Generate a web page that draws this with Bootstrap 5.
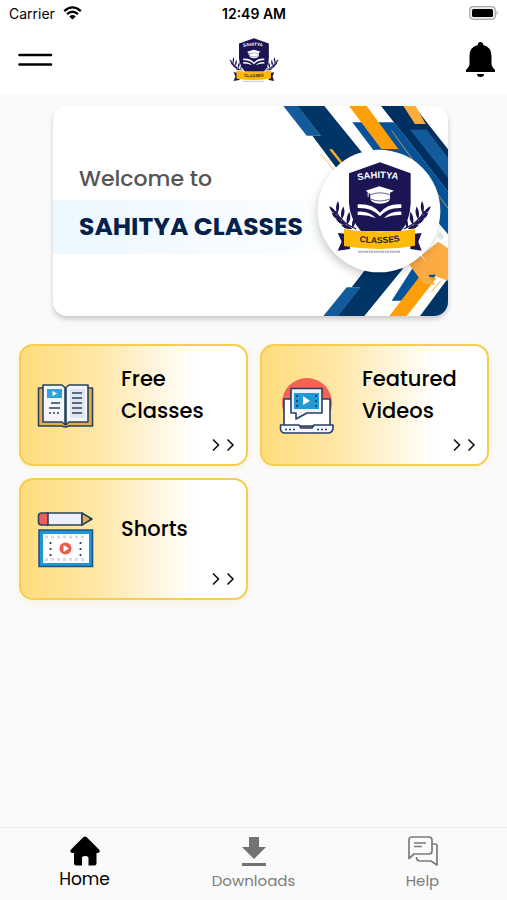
<!DOCTYPE html>
<html lang="en">
<head>
<meta charset="utf-8">
<meta name="viewport" content="width=device-width, initial-scale=1">
<title>Sahitya Classes</title>
<link href="https://cdn.jsdelivr.net/npm/bootstrap@5.3.0/dist/css/bootstrap.min.css" rel="stylesheet">
<style>
  body { background: #fafafa; color: #000; font-family: Poppins, Inter, "Liberation Sans", sans-serif; }
  svg { display: block; flex-shrink: 0; }
  .status-bar { height: 28px; font-family: Inter, "Liberation Sans", sans-serif; font-size: 14px; line-height: 28px; padding: 0 8px 0 9px; }
  .status-side { flex: 1 1 0; }
  .top-bar { height: 66px; padding: 0 12px 3px; }
  .top-side { flex: 1 1 0; }
  .banner { margin: 12px 59px 28px 53px; height: 210px; border-radius: 14px; box-shadow: 0 3px 5px rgba(0,0,0,.2); overflow: hidden; }
  .banner-art { right: 0; top: 0; height: 100%; }
  .banner-hello { font-size: 22px; line-height: 32px; font-weight: 500; color: #555; padding: 57px 0 5px 26px; }
  .banner-name { font-size: 25px; line-height: 54px; font-weight: 700; color: #04224a; padding-left: 26px; background: linear-gradient(90deg, #ecf7ff, #fff 80%); }
  .tiles { gap: 12px; grid-template-columns: 1fr 1fr; padding: 0 18px 0 19px; }
  .tile { min-height: 122px; border: 2px solid #f6cd4f; border-radius: 14px; background: linear-gradient(90deg, #ffdc7c, #ffe7a8 34%, #fff 77%); box-shadow: 0 2px 6px rgba(246,205,79,.2); padding: 0 16px; color: #000; gap: 27px; }
  .tile:hover { color: #000; }
  .tile-name { font-size: 21px; line-height: 32px; font-weight: 500; padding-bottom: 20px; }
  .tile-more { right: 11px; bottom: 12px; }
  .tab-bar { height: 73px; border-top: 1px solid #ececec; padding-top: 8px; }
  .tab { font-size: 15px; line-height: 24px; color: #7b7b7b; gap: 3px; }
  .tab.current { color: #000; font-size: 17px; gap: 1px; }
</style>
<script src="https://cdn.jsdelivr.net/npm/bootstrap@5.3.0/dist/js/bootstrap.bundle.min.js"></script>
</head>
<body class="d-flex flex-column min-vh-100">
<svg width="0" height="0" class="position-absolute" aria-hidden="true">
  <defs>
    <path id="arc-top" d="M99 77Q164 61 232 77"/>
    <path id="arc-ribbon" d="M103 260Q165 270 226 258"/>
    <g id="laurel" fill="#1c1553" stroke="#1c1553">
      <path d="M32 168Q50 205 94 222" fill="none" stroke-width="4"/>
      <path d="M36 176Q29 155 39 138Q48 158 36 176ZM50 194Q44 174 55 154Q64 176 50 194ZM66 209Q61 188 73 170Q82 192 66 209ZM82 220Q78 200 88 186Q96 204 82 220ZM38 179Q29 161 13 153Q16 175 38 179ZM49 195Q38 176 20 173Q26 194 49 195ZM65 209Q51 192 33 192Q41 210 65 209ZM82 221Q66 206 48 209Q59 225 82 221Z" stroke="none"/>
    </g>
    <symbol id="crest" viewBox="10 15 310 285">
      <path d="M165 22L257 55V145Q255 198 227 229H108Q74 190 72 145V55Z" fill="#1c1553"/>
      <use href="#laurel"/>
      <use href="#laurel" transform="translate(330 0) scale(-1 1)"/>
      <path d="M38 234L75 238V282L38 287L50 260ZM290 234L256 238V282L290 287L280 260Z" fill="#1c1553"/>
      <path d="M57 222Q165 242 270 222V272Q165 292 57 273Z" fill="#fdbb08"/>
      <path d="M122 107L163 94L207 107L195 113V131Q193 145 165 146Q138 144 136 131V116L131 114V125H128V111Z" fill="#fff"/>
      <path d="M137 119Q165 108 194 119M137 132Q165 144 194 132" fill="none" stroke="#1c1553" stroke-width="2"/>
      <path d="M98 148Q142 145 165 173Q188 145 229 148V159Q188 157 165 184Q140 157 98 159ZM98 170Q132 167 153 190Q126 178 98 180ZM229 170Q197 167 176 190Q203 178 229 180Z" fill="#fff"/>
      <text font-family="Liberation Sans, Arial, sans-serif" font-weight="700" font-size="28" fill="#fff"><textPath href="#arc-top">SAHITYA</textPath></text>
      <text font-family="Liberation Sans, Arial, sans-serif" font-weight="700" font-size="26" fill="#251a2c"><textPath href="#arc-ribbon">CLASSES</textPath></text>
      <path d="M99 290H226" stroke="#aaa8b5" stroke-width="6" stroke-dasharray="4 1 3 1 5 2"/>
    </symbol>
    <symbol id="chevrons" viewBox="0 0 24 14">
      <path d="M2 1.500L7.500 7L2 12.500M16.500 1.500L22 7L16.500 12.500" fill="none" stroke="#111" stroke-width="1.600"/>
    </symbol>
  </defs>
</svg>

<div class="status-bar bg-white d-flex">
  <div class="status-side d-flex align-items-center gap-2">
    <span>Carrier</span>
    <svg width="19" height="16" viewBox="0 0 19 16" aria-label="Wi-Fi"><path d="M1.200 5.200Q9.500-2.400 17.800 5.200M4 8.200Q9.500 3.200 15 8.200" fill="none" stroke="#000" stroke-width="2.300"/><path d="M6.300 10.400Q9.500 7.800 12.700 10.400L9.500 13.600Z"/></svg>
  </div>
  <strong class="fw-semibold">12:49 AM</strong>
  <div class="status-side d-flex align-items-center justify-content-end">
    <svg width="30" height="16" viewBox="0 0 30 16" aria-label="Battery"><rect x=".7" y=".7" width="25.600" height="12.600" rx="3.500" fill="#eee" stroke="#aaa" stroke-width="1.200"/><rect x="3" y="3" width="21" height="8" rx="1.500"/><path d="M27.500 4.500Q30 7 27.500 9.500Z" fill="#aaa"/></svg>
  </div>
</div>

<header class="top-bar bg-white d-flex align-items-center">
  <div class="top-side d-flex">
    <button class="btn p-0 border-0" type="button" aria-label="Menu"><svg width="41" height="14" viewBox="0 0 41 14"><path d="M7.500 2H39M7.500 11.500H39" stroke="#000" stroke-width="2.600" stroke-linecap="round"/></svg></button>
  </div>
  <svg width="50" height="46" role="img" aria-label="Sahitya Classes"><use href="#crest"/></svg>
  <div class="top-side d-flex justify-content-end">
    <button class="btn p-0 border-0" type="button" aria-label="Notifications"><svg width="29" height="35" viewBox="0 0 29 35"><path d="M14.500 0Q17 0 17.300 3Q25.500 5 25.500 14V22Q25.500 24.500 29 28V30H0V28Q3.500 24.500 3.500 22V14Q3.500 5 11.700 3Q12 0 14.500 0ZM11 32H18Q18 35 14.500 35Q11 35 11 32Z"/></svg></button>
  </div>
</header>

<main class="flex-grow-1">
  <section class="banner bg-white position-relative">
    <div class="banner-hello">Welcome to</div>
    <h1 class="banner-name m-0">SAHITYA CLASSES</h1>
    <svg class="banner-art position-absolute" viewBox="0 33 534 630" aria-hidden="true">
      <defs><filter id="soft" x="-30%" y="-30%" width="160%" height="160%"><feGaussianBlur stdDeviation="14"/></filter></defs>
      <path d="M82 33H163L290 190L215 240L127 122H152Z" fill="#003566"/>
      <path d="M40 33H84L152 122H110Z" fill="#145b9c"/>
      <path d="M177 163H187L215 198V210Z" fill="#f5ab32"/>
      <path d="M152 177L196 230" stroke="#f5c46c" stroke-width="3"/>
      <path d="M247 82H372L534 290V418L490 365L310 165Z" fill="#07539a"/>
      <path d="M333 33H432L534 163V290L400 118Z" fill="#003062"/>
      <path d="M420 104H470L534 188V248Z" fill="#145b9c"/>
      <path d="M400 33H437L467 87H435Z" fill="#fbae3c"/>
      <path d="M237 33H290L385 162H334Z" fill="#ff9f08"/>
      <path d="M365 107L534 340" stroke="#a89b65" stroke-width="3"/>
      <path d="M285 525L400 520L283 663H203L270 577H245Z" fill="#003566"/>
      <path d="M230 577H272L205 663H160Z" fill="#145b9c"/>
      <path d="M440 500L365 617H430L534 500Z" fill="#07539a"/>
      <path d="M358 663H410L500 548L450 543Z" fill="#ff9f08"/>
      <path d="M534 550L450 663H534Z" fill="#003566"/>
      <path d="M505 440L534 460V557L500 545L455 480Z" fill="#fbab43"/>
      <path d="M415 505L460 566L495 570L475 540L505 538L450 480Z" fill="#fbab43"/>
      <path d="M484 590L512 558" stroke="#f5ab32" stroke-width="3"/>
      <path d="M508 410L524 425L514 435L503 425Z" fill="#dceae5"/>
      <circle cx="322" cy="362" r="180" fill="#000" opacity=".22" filter="url(#soft)"/>
      <circle cx="327" cy="348" r="184" fill="#fff"/>
      <use href="#crest" x="175" y="195" width="310" height="285"/>
    </svg>
  </section>

  <nav class="tiles d-grid" aria-label="Sections">
    <a href="#free" class="tile d-flex align-items-center position-relative text-decoration-none">
      <svg width="57" height="57" viewBox="0 0 57 57">
        <g stroke="#27445c" stroke-width="1.600" stroke-linejoin="round">
          <path d="M1.500 11H55.500V49H32Q28.500 51 25 49H1.500Z" fill="#e5aa50"/>
          <path d="M6 8H25L28.500 11L32 8H51V45H32L28.500 48L25 45H6Z" fill="#f4f6fb"/>
          <path d="M28.500 11V48" stroke-width="2.600"/>
        </g>
        <path d="M10 12H25V21H10Z" fill="#30a4da"/><path d="M15.500 14L20 16.500L15.500 19Z" fill="#fff"/>
        <path d="M33 12H48V41H33Z" fill="#e1e6f1"/>
        <path d="M14 26H23M12 31H23M35 16H45M35 21H45M35 26H45M35 31H45M35 36H45" stroke="#27445c" stroke-width="1.700"/>
        <path d="M12 36H24" stroke="#27445c" stroke-width="1.600" stroke-dasharray="2 2"/>
      </svg>
      <span class="tile-name">Free<br>Classes</span>
      <svg class="tile-more position-absolute" width="24" height="14"><use href="#chevrons"/></svg>
    </a>
    <a href="#featured" class="tile d-flex align-items-center position-relative text-decoration-none">
      <svg width="57" height="57" viewBox="0 0 57 57">
        <circle cx="29" cy="26" r="25" fill="#f46351"/>
        <g stroke="#263e68" stroke-width="1.600" stroke-linejoin="round">
          <path d="M6 22H52V49H6Z" fill="#fff"/>
          <path d="M13 11.500H44V36H29L18 42V36H13Z" fill="#eef2fa"/>
          <path d="M2.500 48H21L23 51H34L36 48H55V52Q54 56 50 56H7Q3 56 2.500 52Z" fill="#f6f7fd"/>
        </g>
        <path d="M16 16H41V32H16Z" fill="#2499d3"/>
        <path d="M19 18V31M38 18V31" stroke="#174a73" stroke-width="2" stroke-dasharray="2 3"/>
        <path d="M25 19L32 24L25 28Z" fill="#fff"/>
        <path d="M7 52.500H18M39 52.500H51" stroke="#263e68" stroke-width="1.500" stroke-dasharray="2 2"/>
      </svg>
      <span class="tile-name">Featured<br>Videos</span>
      <svg class="tile-more position-absolute" width="24" height="14"><use href="#chevrons"/></svg>
    </a>
    <a href="#shorts" class="tile d-flex align-items-center position-relative text-decoration-none">
      <svg width="57" height="57" viewBox="0 0 57 57">
        <g stroke="#27445c" stroke-width="1.600" stroke-linejoin="round">
          <path d="M10 2H45V14H10Z" fill="#edf0fb"/>
          <path d="M11 2V14H4.500Q1.500 14 1.500 11V5Q1.500 2 4.500 2Z" fill="#ef5d5b"/>
          <path d="M45 2L55 8L45 14Z" fill="#e5aa50"/>
        </g>
        <path d="M52 6.200L55.500 8L52 10Z" fill="#27445c"/>
        <path d="M2 19H55.500V55.500H2Z" fill="#2196d2" stroke="#21557e" stroke-width="1.600"/>
        <path d="M6 23H52V52H6Z" fill="#fff"/>
        <path d="M8 26H50M8 48.500H50" stroke="#d6dbe5" stroke-width="3" stroke-dasharray="3 3"/>
        <path d="M13.500 31V46M43.500 31V46" stroke="#27445c" stroke-width="1.800" stroke-dasharray="2 4"/>
        <circle cx="28.500" cy="37.500" r="6" fill="#ec5b4b"/><path d="M26.500 34L32 37.500L26.500 41Z" fill="#fff"/>
      </svg>
      <span class="tile-name">Shorts</span>
      <svg class="tile-more position-absolute" width="24" height="14"><use href="#chevrons"/></svg>
    </a>
  </nav>
</main>

<nav class="tab-bar row g-0 text-center" aria-label="Main">
  <a href="#home" class="tab current col d-flex flex-column align-items-center text-decoration-none" aria-current="page">
    <svg width="30" height="30" viewBox="0 0 30 30"><path d="M13.500 1Q15 0 16.500 1L29 13.500Q31 16 28 17H26.500V27Q26.500 29.500 24 29.500H18.500V22Q18.500 20 15 20Q12 20 12 22V29.500H6.500Q4 29.500 4 27V17H2Q-1 16 1 13.500Z"/></svg>
    <span>Home</span>
  </a>
  <a href="#downloads" class="tab col d-flex flex-column align-items-center text-decoration-none">
    <svg width="26" height="30" viewBox="0 0 26 30"><path d="M8 1H18V11H25L13 23L1 11H8ZM1 27H25V30H1Z" fill="#737373"/></svg>
    <span>Downloads</span>
  </a>
  <a href="#help" class="tab col d-flex flex-column align-items-center text-decoration-none">
    <svg width="30" height="30" viewBox="0 0 30 30"><path d="M4 1H21Q24 1 24 4V15Q24 18 21 18H6L1 22.500V4Q1 1 4 1ZM24 8H27Q29 8 29 10V29L23 25H12Q8.500 25 8.500 21M6 7H18M6 10.500H14" fill="none" stroke="#7b7b7b" stroke-width="1.700" stroke-linejoin="round"/></svg>
    <span>Help</span>
  </a>
</nav>
</body>
</html>
